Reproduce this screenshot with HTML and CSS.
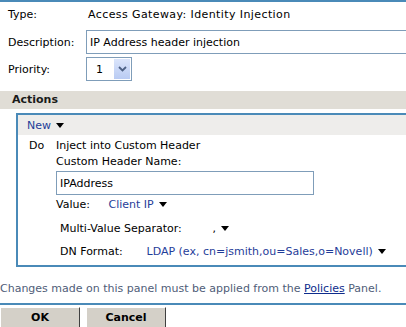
FILE: index.html
```html
<!DOCTYPE html>
<html lang="en">
<head>
  <meta charset="UTF-8">
  <title>Rule Action</title>
  <link rel="stylesheet" href="styles.css">
</head>
<body>
  <div class="page">
    <div class="rule-bar"></div>

    <!-- rule properties -->
    <div class="props">
      <span class="props-label">Type:</span>
      <span class="props-value type-value">Access Gateway: Identity Injection</span>

      <label class="props-label" for="description">Description:</label>
      <input class="text-field desc-field" id="description" type="text" value="IP Address header injection">

      <span class="props-label">Priority:</span>
      <div class="select-box">
        <span class="select-text">1</span>
        <span class="select-btn">
          <svg width="9" height="6" viewBox="0 0 9 6"><path d="M1 1 L4.5 4.5 L8 1" fill="none" stroke="#4d6185" stroke-width="1.8"/></svg>
        </span>
      </div>
    </div>

    <!-- actions -->
    <div class="section-head">Actions</div>
    <div class="actions-frame">
      <div class="actions-toolbar">
        <span class="link-blue">New</span><span class="caret"></span>
      </div>
      <div class="action-body">
        <div class="action-row">
          <span class="action-do">Do</span>
          <span>Inject into Custom Header</span>
        </div>
        <div class="action-detail">
          <div class="detail-line">Custom Header Name:</div>
          <input class="text-field header-field" type="text" value="IPAddress">
          <div class="detail-line value-line">
            <span class="value-label">Value:</span>
            <span class="link-blue">Client IP</span><span class="caret"></span>
          </div>
          <div class="detail-line sub-line">
            <span class="sep-label">Multi-Value Separator:</span>
            <span>,</span><span class="caret"></span>
          </div>
          <div class="detail-line sub-line dn-line">
            <span class="dn-label">DN Format:</span>
            <span class="link-blue">LDAP (ex, cn=jsmith,ou=Sales,o=Novell)</span><span class="caret"></span>
          </div>
        </div>
      </div>
    </div>

    <p class="notice">Changes made on this panel must be applied from the <a href="#">Policies</a> Panel.</p>

    <div class="button-bar">
      <button class="btn">OK</button>
      <button class="btn">Cancel</button>
    </div>
  </div>
</body>
</html>
```

FILE: styles.css
```css
/* ===== General ===== */
body {
  margin: 0;
  padding: 0;
  font-family: 'DejaVu Sans', Verdana, sans-serif;
  font-size: 11px;
  color: #000;
  background-color: #fff;
  overflow: hidden;
}

.page {
  width: 406px;
  height: 327px;
  overflow: hidden;
}

.rule-bar {
  height: 2px;
  background-color: #4a8ab8;
}

/* ===== Properties ===== */
.props {
  display: grid;
  grid-template-columns: 78px 1fr;
  grid-template-rows: 25px 24px 24px;
  row-gap: 3px;
  align-items: center;
  padding-left: 8px;
}

.type-value {
  padding-left: 2px;
  letter-spacing: 0.4px;
}

.text-field {
  box-sizing: border-box;
  height: 24px;
  border: 1px solid #7f9db9;
  padding: 0 3px;
  font-family: inherit;
  font-size: 11px;
  color: #000;
  outline: none;
}

.desc-field {
  width: 340px;
}

.select-box {
  box-sizing: border-box;
  width: 46px;
  height: 24px;
  border: 1px solid #7f9db9;
  display: flex;
  align-items: center;
  justify-content: space-between;
  padding: 1px;
}

.select-text {
  padding-left: 8px;
}

.select-btn {
  width: 16px;
  height: 20px;
  background: linear-gradient(#dbe5fb, #b9cbf3);
  display: flex;
  align-items: center;
  justify-content: center;
}

/* ===== Actions ===== */
.section-head {
  margin-top: 10px;
  height: 18px;
  line-height: 18px;
  background-color: #e0ddd6;
  padding-left: 12px;
  font-weight: bold;
  color: #1a1a1a;
}

.actions-frame {
  margin: 4px 0 0 16px;
  border-top: 2px solid #4a8ab8;
  border-left: 2px solid #4a8ab8;
  border-bottom: 2px solid #4a8ab8;
  height: 150px;
}

.actions-toolbar {
  height: 20px;
  display: flex;
  align-items: center;
  padding-left: 9px;
  background-color: #eeedeb;
}

.link-blue {
  color: #1f3d99;
}

.caret {
  display: inline-block;
  width: 0;
  height: 0;
  margin-left: 5px;
  border-left: 4px solid transparent;
  border-right: 4px solid transparent;
  border-top: 5px solid #000;
  vertical-align: 1px;
}

.action-body {
  padding-top: 1px;
}

.action-row {
  display: flex;
  height: 18px;
  align-items: center;
}

.action-do {
  width: 27px;
  padding-left: 11px;
}

.action-detail {
  padding-left: 38px;
}

.detail-line {
  height: 16px;
  line-height: 16px;
}

.header-field {
  display: block;
  width: 258px;
  margin-top: 1px;
}

.value-line {
  margin-top: 2px;
}

.value-label {
  display: inline-block;
  width: 49px;
}

.sub-line {
  padding-left: 4px;
  margin-top: 8px;
}

.sep-label {
  display: inline-block;
  width: 149px;
}

.dn-line {
  margin-top: 7px;
}

.dn-label {
  display: inline-block;
  width: 83px;
}

/* ===== Footer ===== */
.notice {
  margin: 0;
  height: 36px;
  line-height: 44px;
  color: #4f5d78;
  border-bottom: 2px solid #4a8ab8;
}

.notice a {
  color: #0e2c8c;
}

.button-bar {
  display: flex;
  gap: 6px;
  padding-top: 2px;
}

.btn {
  width: 80px;
  height: 21px;
  background-color: #d4d0c8;
  border: 1px solid;
  border-color: #fff #404040 #404040 #fff;
  font-family: inherit;
  font-size: 11px;
  font-weight: bold;
  color: #000;
  padding: 0;
}
```
